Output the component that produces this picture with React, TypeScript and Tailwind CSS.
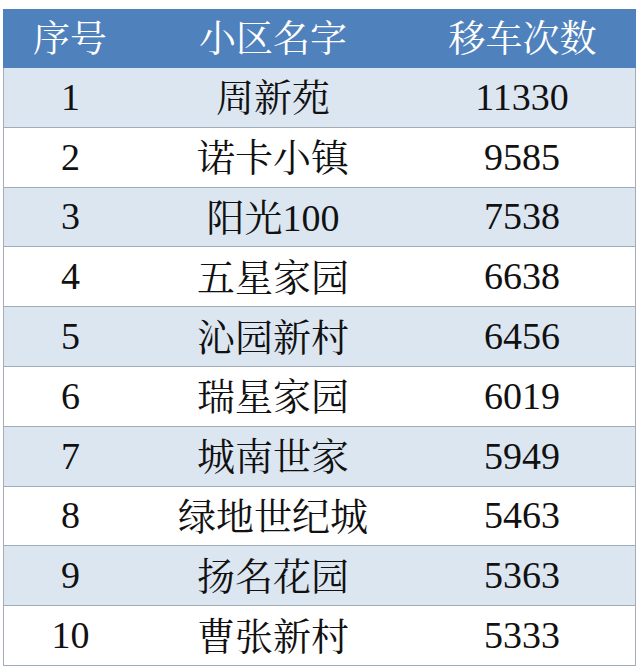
import React from "react";

const rows: [string, string, string][] = [
  ["1", "周新苑", "11330"],
  ["2", "诺卡小镇", "9585"],
  ["3", "阳光100", "7538"],
  ["4", "五星家园", "6638"],
  ["5", "沁园新村", "6456"],
  ["6", "瑞星家园", "6019"],
  ["7", "城南世家", "5949"],
  ["8", "绿地世纪城", "5463"],
  ["9", "扬名花园", "5363"],
  ["10", "曹张新村", "5333"],
];

function Txt({ s }: { s: string }) {
  const parts = s.split(/(\d+)/).filter((p) => p !== "");
  return (
    <>
      {parts.map((p, i) =>
        /^\d+$/.test(p) ? (
          <span key={i} className="font-['Liberation_Serif']">
            {p}
          </span>
        ) : (
          <span key={i} className="font-['Noto_Serif_CJK_SC']">
            {p}
          </span>
        )
      )}
    </>
  );
}

export default function App() {
  return (
    <div className="w-[639px] h-[670px] bg-white pt-[9px] pl-[3px] font-serif">
      <div className="w-[633px] flex flex-col">
        <div className="h-[59px] bg-[#4f81bd] text-white text-[37px] leading-none grid grid-cols-[134px_272px_227px] items-center">
          <div className="text-center"><Txt s="序号" /></div>
          <div className="text-center"><Txt s="小区名字" /></div>
          <div className="text-center"><Txt s="移车次数" /></div>
        </div>
        <div className="border-x border-[#a6acb4]">
          {rows.map((r, i) => (
            <div
              key={r[0]}
              className={
                "h-[59.8px] border-b border-[#9fabb8] grid grid-cols-[133px_272px_226px] items-center text-[38px] leading-none text-[#111] " +
                (i % 2 === 0 ? "bg-[#dce6f1]" : "bg-white")
              }
            >
              <div className="text-center"><Txt s={r[0]} /></div>
              <div className="text-center"><Txt s={r[1]} /></div>
              <div className="text-center"><Txt s={r[2]} /></div>
            </div>
          ))}
        </div>
      </div>
    </div>
  );
}
